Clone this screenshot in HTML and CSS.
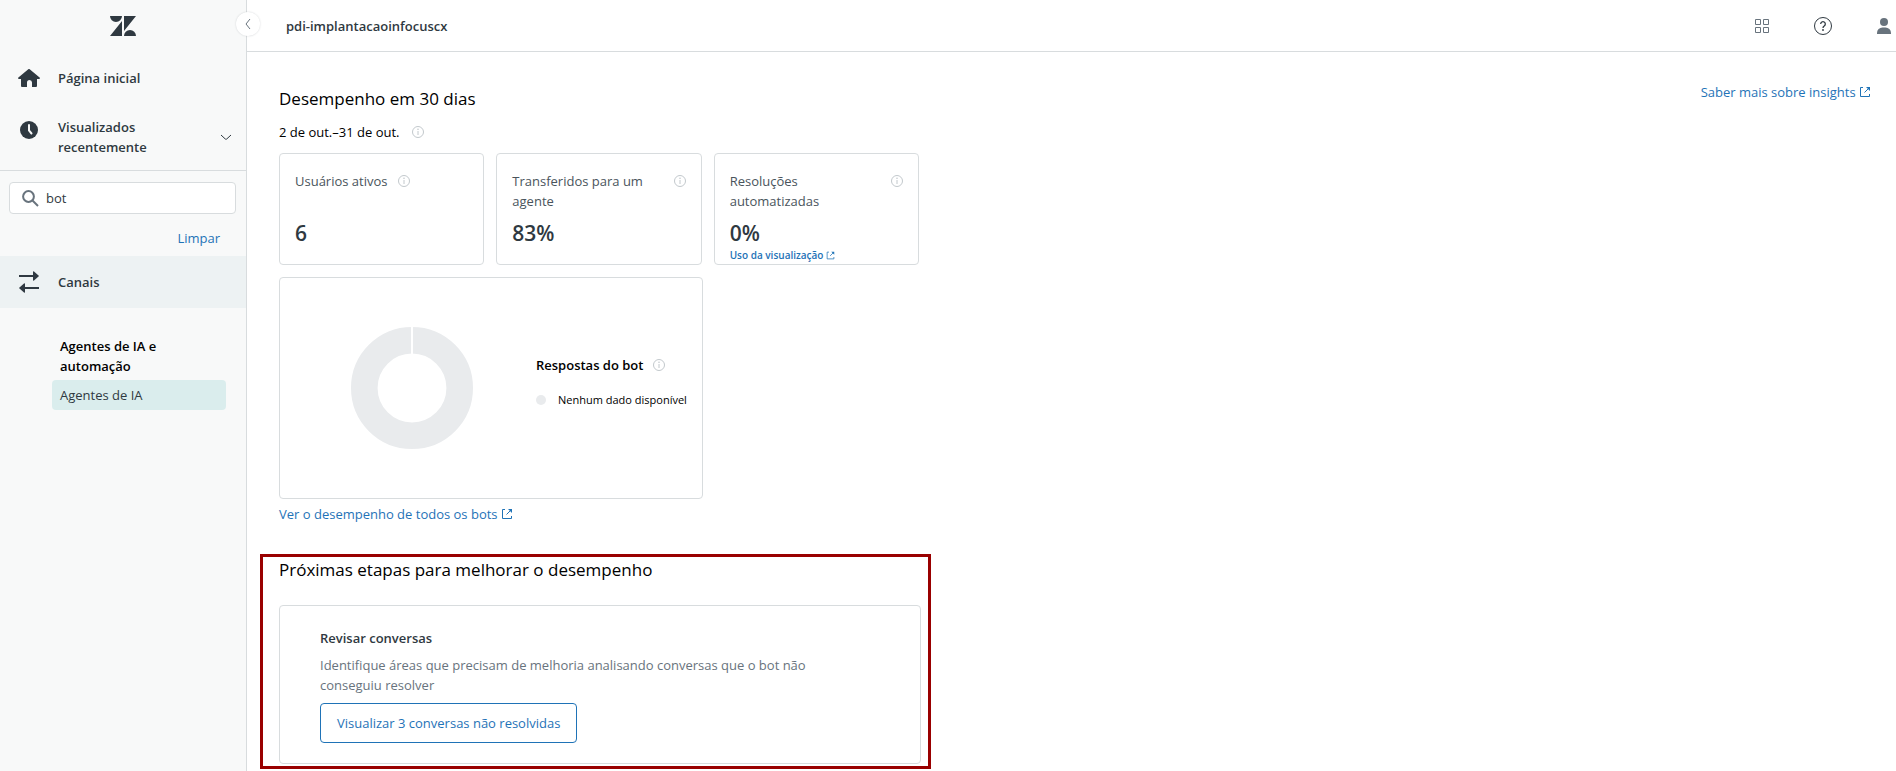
FILE: index.html
```html
<!DOCTYPE html>
<html lang="pt-BR">
<head>
  <meta charset="UTF-8" />
  <meta name="viewport" content="width=device-width, initial-scale=1.0" />
  <title>Central de administração</title>
  <link rel="stylesheet" href="styles.css">
</head>
<body>
  <!-- Shared icons -->
  <svg class="sprite" aria-hidden="true">
    <symbol id="info" viewBox="0 0 12 12">
      <circle cx="6" cy="6" r="5.5" fill="none" stroke="currentColor" />
      <path d="M6 5v4" stroke="currentColor" />
      <circle cx="6" cy="3.3" r=".8" fill="currentColor" />
    </symbol>
    <symbol id="external" viewBox="0 0 12 12">
      <path d="M4 1.5H1.5v9h9V8M5.5 6.5l4-4" fill="none" stroke="currentColor" />
      <path d="M7 1h4v4z" fill="currentColor" />
    </symbol>
  </svg>

  <div class="app">
    <aside class="sidebar">
      <div class="logo">
        <svg width="26" height="20" viewBox="0 0 26 20" fill="currentColor">
          <path d="M0 0h12a6 6 0 0 1-12 0zM12 5v15H0zM14 0h12L14 15zM14 20a6 6 0 0 1 12 0z" />
        </svg>
      </div>
      <button class="collapse" aria-label="Recolher menu">
        <svg width="12" height="12" viewBox="0 0 12 12" fill="none" stroke="currentColor"><path d="M8 1L4 6l4 5" /></svg>
      </button>

      <nav>
        <a class="nav-item" href="#">
          <svg width="22" height="18" viewBox="0 0 22 18" fill="currentColor">
            <path d="M10 .4a1.5 1.5 0 0 1 2 0l9.600 8.100c.7.6.3 1.500-.6 1.500h-2v7a1 1 0 0 1-1 1h-4v-4.500a2.500 2.500 0 0 0-5 0V18H4a1 1 0 0 1-1-1v-7H1c-.9 0-1.300-.9-.6-1.500z" />
          </svg>
          <span>Página inicial</span>
        </a>
        <button class="nav-item recent">
          <svg width="22" height="18" viewBox="0 0 22 18">
            <circle cx="11" cy="9" r="9" fill="currentColor" />
            <path d="M11 4v5.5l2.5 3" fill="none" stroke="#f8f9f9" stroke-width="2" stroke-linecap="round" />
          </svg>
          <span>Visualizados recentemente</span>
          <svg class="chevron" width="12" height="12" viewBox="0 0 12 12" fill="none" stroke="currentColor"><path d="M1 4l4.300 4q.7.500 1.400 0L11 4" /></svg>
        </button>
      </nav>

      <div class="search">
        <label class="search-box">
          <svg width="17" height="17" viewBox="0 0 17 17" fill="none" stroke="currentColor" stroke-width="2"><circle cx="6.5" cy="6.5" r="5.4" /><path d="M10.500 10.500l5.500 5.500" /></svg>
          <input type="text" value="bot" aria-label="Pesquisar">
        </label>
        <a class="clear" href="#">Limpar</a>
      </div>

      <a class="nav-item active" href="#">
        <svg width="22" height="22" viewBox="0 0 22 22" fill="currentColor">
          <path d="M1 4h14V1q0-1.200 1-.6l4.500 4q.9.6 0 1.200l-4.500 4q-1 .6-1-.6V6H1zM21 16H7v-3q0-1.200-1-.6l-4.500 4q-.9.6 0 1.200l4.500 4q1 .6 1-.6V18h14z" />
        </svg>
        <span>Canais</span>
      </a>

      <div class="submenu">
        <h2>Agentes de IA e automação</h2>
        <a href="#">Agentes de IA</a>
      </div>
    </aside>

    <div class="page">
      <header class="topbar">
        <strong>pdi-implantacaoinfocuscx</strong>
        <div class="actions">
          <button aria-label="Produtos">
            <svg width="14" height="14" viewBox="0 0 14 14" fill="none" stroke="currentColor"><path d="M.5.5h5v5h-5zM8.500.5h5v5h-5zM.5 8.500h5v5h-5zM8.500 8.500h5v5h-5z" /></svg>
          </button>
          <button aria-label="Ajuda">
            <svg width="18" height="18" viewBox="0 0 18 18" fill="none" stroke="#2f3941"><circle cx="9" cy="9" r="8.5" /><path d="M6.700 7a2.300 2.300 0 1 1 3.500 2c-.8.500-1.200.9-1.200 2" stroke-width="1.300" /><circle cx="9" cy="13" r=".9" fill="#2f3941" stroke="none" /></svg>
          </button>
          <button aria-label="Perfil">
            <svg width="14" height="16" viewBox="0 0 14 16" fill="currentColor"><circle cx="7" cy="4" r="4" /><path d="M0 16v-1a5.500 5.500 0 0 1 5.500-5.500h3A5.500 5.500 0 0 1 14 15v1z" /></svg>
          </button>
        </div>
      </header>

      <main>
        <section class="performance">
          <div class="section-head">
            <h1>Desempenho em 30 dias</h1>
            <a href="#">Saber mais sobre insights <svg class="ext"><use href="#external" /></svg></a>
          </div>
          <p class="period">2 de out.–31 de out. <svg class="info"><use href="#info" /></svg></p>

          <div class="metrics">
            <div class="card metric">
              <div class="metric-title"><span>Usuários ativos</span><svg class="info"><use href="#info" /></svg></div>
              <div class="value">6</div>
            </div>
            <div class="card metric">
              <div class="metric-title spread"><span>Transferidos para um agente</span><svg class="info"><use href="#info" /></svg></div>
              <div class="value">83%</div>
            </div>
            <div class="card metric">
              <div class="metric-title spread"><span>Resoluções automatizadas</span><svg class="info"><use href="#info" /></svg></div>
              <div class="value">0%</div>
              <a class="usage" href="#">Uso da visualização <svg class="ext small"><use href="#external" /></svg></a>
            </div>
          </div>

          <div class="card chart">
            <svg width="122" height="122" viewBox="0 0 122 122">
              <circle cx="61" cy="61" r="47.7" fill="none" stroke="#e9ebed" stroke-width="26.6" />
              <path d="M61 0v28" stroke="#fff" stroke-width="2" />
            </svg>
            <div class="legend">
              <h3>Respostas do bot <svg class="info"><use href="#info" /></svg></h3>
              <p><span class="dot"></span>Nenhum dado disponível</p>
            </div>
          </div>
          <a href="#">Ver o desempenho de todos os bots <svg class="ext"><use href="#external" /></svg></a>
        </section>

        <section class="next-steps">
          <h1>Próximas etapas para melhorar o desempenho</h1>
          <div class="card review">
            <h3>Revisar conversas</h3>
            <p>Identifique áreas que precisam de melhoria analisando conversas que o bot não conseguiu resolver</p>
            <button>Visualizar 3 conversas não resolvidas</button>
          </div>
        </section>
      </main>
    </div>
  </div>
</body>
</html>
```
FILE: styles.css
```css
* {
  box-sizing: border-box;
}

body {
  margin: 0;
  font-family: "Segoe UI", "Open Sans", "Noto Sans", sans-serif;
  font-size: 13px;
  line-height: 20px;
  color: #2f3941;
  background: #fff;
}

h1, h2, h3, p {
  margin: 0;
  font-size: 13px;
}

h1 {
  font-size: 17px;
  font-weight: 400;
  line-height: 24px;
  color: #000;
}

h2, h3, strong {
  font-weight: 600;
}

a {
  color: #1f73b7;
  text-decoration: none;
}

button {
  font: inherit;
  color: inherit;
  background: none;
  border: 0;
  padding: 0;
  cursor: pointer;
}

svg {
  flex: none;
}

.sprite {
  display: none;
}

.info {
  width: 12px;
  height: 12px;
  color: #c2c8cc;
}

.ext {
  width: 12px;
  height: 12px;
  vertical-align: -1px;
}

.ext.small {
  width: 9px;
  height: 9px;
}

.app {
  display: flex;
  min-height: 100vh;
}

/* Sidebar */
.sidebar {
  position: relative;
  flex: none;
  width: 247px;
  background: #f8f9f9;
  border-right: 1px solid #d8dcde;
}

.logo {
  display: flex;
  justify-content: center;
  height: 52px;
  padding-top: 16px;
}

.collapse {
  position: absolute;
  top: 12px;
  right: -14px;
  display: flex;
  align-items: center;
  justify-content: center;
  width: 24px;
  height: 24px;
  border-radius: 50%;
  background: #fff;
  color: #68737d;
  box-shadow: 0 0 2px rgba(47, 57, 65, 0.2);
}

.nav-item {
  display: flex;
  align-items: center;
  gap: 18px;
  width: 100%;
  height: 52px;
  padding: 0 14px 0 18px;
  font-weight: 600;
  color: #2f3941;
  text-align: left;
}

.nav-item.recent {
  height: 66px;
  align-items: flex-start;
  padding-top: 13px;
}

.recent > svg:first-child {
  margin-top: 4px;
}

.recent span {
  flex: 1;
}

.recent .chevron {
  margin-top: 14px;
}

.nav-item.active {
  background: #edf2f3;
}

.search {
  display: flex;
  flex-direction: column;
  height: 86px;
  padding: 11px 10px 0 9px;
  border-top: 1px solid #d8dcde;
}

.search-box {
  display: flex;
  align-items: center;
  gap: 7px;
  height: 32px;
  padding: 0 12px;
  background: #fff;
  border: 1px solid #d8dcde;
  border-radius: 4px;
  color: #68737d;
}

.search-box input {
  width: 100%;
  padding: 0;
  border: 0;
  outline: 0;
  font: inherit;
  color: #2f3941;
}

.clear {
  align-self: flex-end;
  margin: 14px 16px 0 0;
}

.submenu {
  padding: 28px 20px 0 52px;
}

.submenu h2 {
  padding: 0 8px 4px;
  color: #000;
}

.submenu a {
  display: block;
  padding: 5px 8px;
  border-radius: 4px;
  background: #daeded;
  color: #2f3941;
}

/* Page */
.page {
  flex: 1;
  min-width: 0;
}

.topbar {
  display: flex;
  align-items: center;
  justify-content: space-between;
  height: 52px;
  padding: 0 5px 0 39px;
  border-bottom: 1px solid #d8dcde;
}

.actions {
  display: flex;
  align-items: center;
  gap: 45px;
  color: #68737d;
}

.actions button {
  display: flex;
}

main {
  padding: 30px 25px 2px 13px;
}

.performance {
  padding-left: 19px;
}

.section-head {
  display: flex;
  justify-content: space-between;
  align-items: flex-start;
}

.section-head h1 {
  padding-top: 5px;
}

.period {
  display: flex;
  align-items: center;
  gap: 12px;
  margin: 11px 0;
  color: #000;
}

.card {
  border: 1px solid #d8dcde;
  border-radius: 4px;
}

.metrics {
  display: grid;
  grid-template-columns: repeat(3, 1fr);
  gap: 12px;
  max-width: 640px;
}

.metric {
  height: 112px;
  padding: 17px 15px 0;
}

.metric-title {
  display: flex;
  align-items: flex-start;
  gap: 10px;
  height: 40px;
  color: #49545c;
}

.metric-title.spread {
  justify-content: space-between;
}

.metric-title .info {
  margin-top: 4px;
}

.value {
  margin-top: 8px;
  font-size: 21px;
  font-weight: 600;
  line-height: 28px;
}

.usage {
  display: block;
  font-size: 10px;
  font-weight: 600;
  line-height: 16px;
}

.chart {
  display: flex;
  align-items: center;
  gap: 63px;
  max-width: 424px;
  height: 222px;
  margin: 12px 0 5px;
  padding-left: 71px;
}

.legend {
  padding-bottom: 12px;
  color: #000;
}

.legend h3 {
  display: flex;
  align-items: center;
  gap: 10px;
}

.legend p {
  display: flex;
  align-items: center;
  gap: 12px;
  margin-top: 15px;
  font-size: 11px;
  white-space: nowrap;
}

.dot {
  width: 10px;
  height: 10px;
  border-radius: 50%;
  background: #e9ebed;
}

.next-steps {
  max-width: 671px;
  margin-top: 30px;
  padding: 1px 7px 2px 16px;
  border: 3px solid #900;
}

.review {
  margin-top: 23px;
  padding: 22px 40px 20px;
}

.review p {
  max-width: 510px;
  margin: 7px 0 8px;
  color: #68737d;
}

.review button {
  height: 40px;
  padding: 0 16px;
  border: 1px solid #1f73b7;
  border-radius: 4px;
  color: #1f73b7;
}
```
